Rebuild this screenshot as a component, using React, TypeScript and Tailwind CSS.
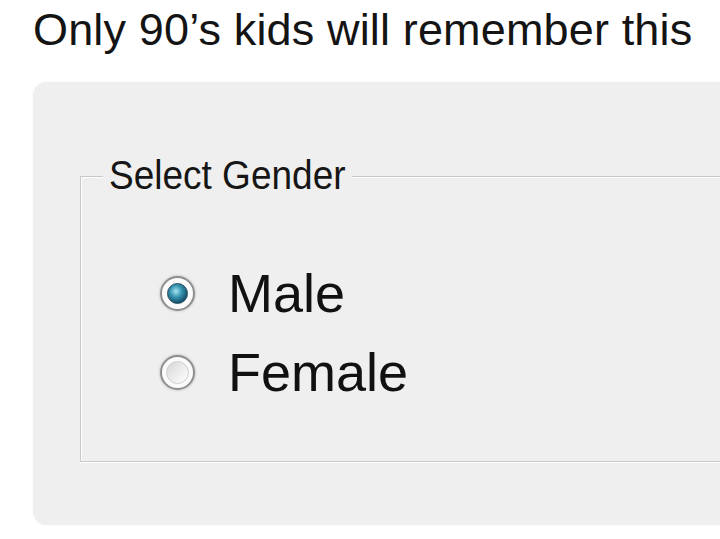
import React from "react";

function Radio({ checked }: { checked: boolean }) {
  return (
    <div className="w-[35px] h-[35px] rounded-full border-[2px] border-[#8f8f8f] bg-[#fbfbfb] shadow-[0_0_2px_1px_rgba(0,0,0,0.12)] flex items-center justify-center shrink-0">
      {checked ? (
        <div className="w-[21px] h-[21px] rounded-full border border-[#23485a] bg-[radial-gradient(circle_at_42%_38%,#a8e6f4_0%,#3a97b2_35%,#155670_70%,#0d3a4e_100%)]" />
      ) : (
        <div className="w-[23px] h-[23px] rounded-full border border-[#cfcfcf] bg-[linear-gradient(135deg,#d6d6d6_0%,#ececec_50%,#ffffff_100%)]" />
      )}
    </div>
  );
}

export default function App() {
  return (
    <div className="w-[720px] h-[539px] bg-white overflow-hidden font-['Liberation_Sans',Arial,sans-serif]">
      <div className="pt-[7px] pl-[33px] text-[45px] leading-[45px] text-[#141414] tracking-[0.15px] whitespace-nowrap">
        Only 90’s kids will remember this
      </div>
      <div className="mt-[30px] ml-[33px] w-[720px] h-[443px] rounded-[14px] bg-[#efefef] pt-[77px] pl-[47px] shadow-[0_0_2px_rgba(0,0,0,0.06)]">
        <fieldset className="w-[700px] border-l border-t border-b border-[#c8c8c8] shadow-[inset_1px_1px_0_#ffffff,0_1px_0_#ffffff] pt-[61px] pb-[49px]">
          <legend className="ml-[22px] px-[6px] bg-[#efefef] text-[37px] leading-[34px] text-[#161616]">
            <span className="inline-block scale-y-[1.08]">Select Gender</span>
          </legend>
          <div className="flex flex-col pl-[79px]">
            <div className="h-[79px] flex items-center gap-[33px]">
              <Radio checked={true} />
              <span className="text-[54px] leading-[79px] text-[#111]">Male</span>
            </div>
            <div className="h-[79px] flex items-center gap-[33px]">
              <Radio checked={false} />
              <span className="text-[54px] leading-[79px] text-[#111]">Female</span>
            </div>
          </div>
        </fieldset>
      </div>
    </div>
  );
}
